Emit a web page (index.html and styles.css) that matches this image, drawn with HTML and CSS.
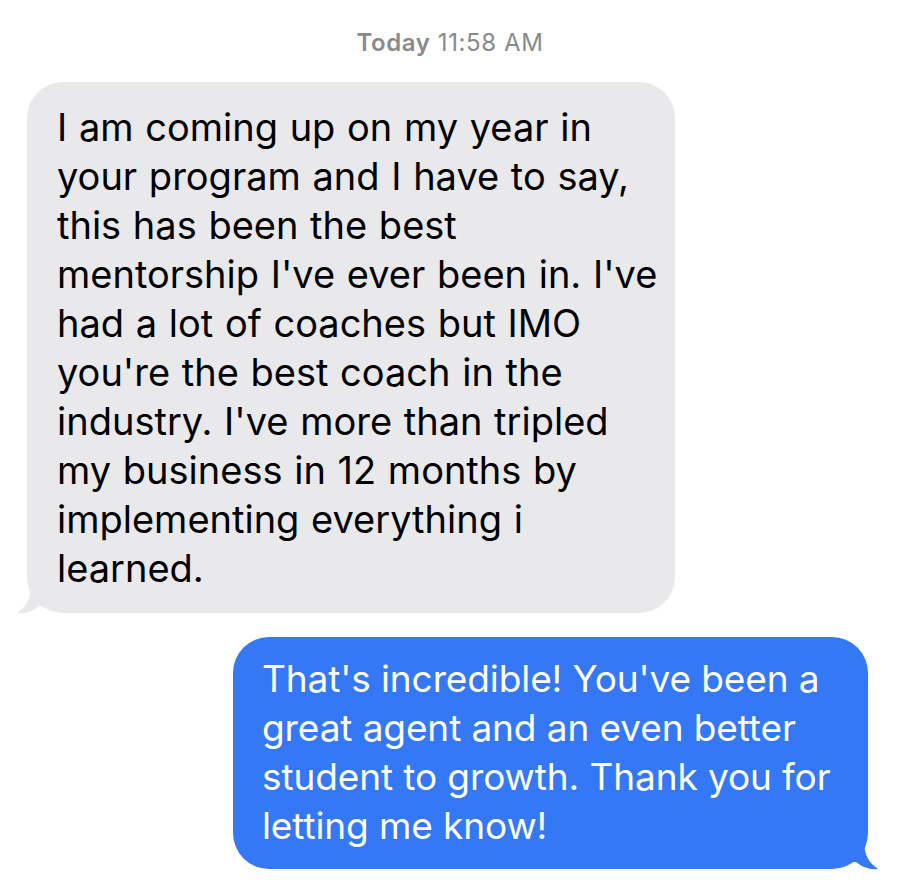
FILE: index.html
```html
<!DOCTYPE html>
<html>
<head>
<meta charset="utf-8">
<link rel="stylesheet" href="styles.css">
</head>
<body>
<div class="thread">
  <div class="stamp"><span class="day">Today</span> 11:58 AM</div>
  <div class="bubble in">
    <p>I am coming up on my year in<br>your program and I have to say,<br>this has been the best<br>mentorship I've ever been in. I've<br>had a lot of coaches but IMO<br>you're the best coach in the<br>industry. I've more than tripled<br>my business in 12 months by<br>implementing everything i<br>learned.</p>
    <svg class="tail tail-in" width="30" height="30" viewBox="0 0 30 30"><path d="M14 0 C14 14 10 22 0 29 C8 30 16 27 22 22 L30 22 L30 0 Z" fill="#e9e9eb"/></svg>
  </div>
  <div class="bubble out">
    <p>That's incredible! You've been a<br>great agent and an even better<br>student to growth. Thank you for<br>letting me know!</p>
    <svg class="tail tail-out" width="30" height="30" viewBox="0 0 30 30"><path d="M16 0 C16 14 20 22 30 29 C22 30 14 27 8 22 L0 22 L0 0 Z" fill="#3478f6"/></svg>
  </div>
</div>
</body>
</html>
```
FILE: styles.css
```css
html, body {
  margin: 0;
  padding: 0;
  background: #ffffff;
}
body {
  font-family: Inter, "Noto Sans", sans-serif;
  width: 900px;
  height: 885px;
  overflow: hidden;
}
.thread {
  display: flex;
  flex-direction: column;
  padding-top: 28px;
}
.stamp {
  text-align: center;
  font-size: 24px;
  line-height: 30px;
  letter-spacing: 0.6px;
  color: #8a8a8e;
  margin-bottom: 24px;
}
.stamp .day {
  font-weight: 600;
}
.bubble {
  position: relative;
  border-radius: 36px;
}
.bubble p {
  margin: 0;
  font-size: 38px;
  line-height: 49px;
  word-spacing: 1px;
  white-space: nowrap;
}
.in {
  margin-left: 27px;
  width: 648px;
  box-sizing: border-box;
  padding: 21px 10px 20px 30px;
  background: #e9e9eb;
  color: #000;
}
.out {
  margin-left: 233px;
  width: 635px;
  box-sizing: border-box;
  margin-top: 24px;
  padding: 17px 10px 19px 29px;
  background: #3478f6;
  color: #fff;
}
.out p {
  font-size: 37px;
  word-spacing: 0;
  letter-spacing: -0.1px;
}
.tail {
  position: absolute;
  bottom: -1px;
}
.tail-in {
  left: -10px;
}
.tail-out {
  right: -10px;
}
```
